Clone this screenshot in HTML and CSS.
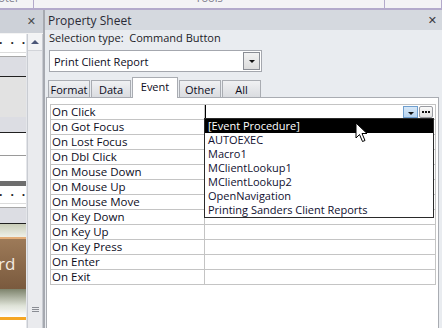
FILE: index.html
```html
<!DOCTYPE html>
<html lang="en">
<head>
  <meta charset="UTF-8">
  <title>Property Sheet</title>
  <link rel="stylesheet" href="styles.css">
</head>
<body>
  <!-- Ribbon strip, mostly scrolled off the top -->
  <div class="ribbon">
    <div class="ribbon-group first"><span class="ribbon-label">Footer</span></div>
    <div class="ribbon-group wide"><span class="ribbon-label">Tools</span></div>
    <div class="ribbon-group"></div>
  </div>

  <div class="workspace">
    <!-- Form design pane (mostly hidden) -->
    <div class="form-pane">
      <div class="form-title"><span class="close-x">&#x2715;</span></div>
      <div class="form-body">
        <div class="design">
          <div class="ruler"><span>·</span><span>·</span><span>·</span></div>
          <div class="rule-lines"></div>
          <div class="section-band"></div>
          <div class="dark-line"></div>
          <div class="detail-grey"></div>
          <div class="section-band short"></div>
          <div class="dark-line"></div>
          <div class="white-block"></div>
          <div class="white-block tall"></div>
          <div class="thick-line"></div>
          <div class="ruler low"><span>·</span><span>·</span><span>·</span></div>
          <div class="rule-lines"></div>
          <div class="section-band short"></div>
          <div class="dark-line"></div>
          <div class="fade-top"></div>
          <div class="brown-button">rd</div>
          <div class="fade-bottom"></div>
          <div class="orange-line"></div>
        </div>
        <div class="vscroll">
          <div class="scroll-up"><span class="tri-up"></span></div>
          <div class="scroll-track"></div>
          <div class="grip"><i></i><i></i><i></i></div>
          <div class="scroll-end"></div>
        </div>
      </div>
    </div>

    <div class="splitter"></div>

    <!-- Property sheet -->
    <div class="sheet">
      <div class="sheet-title">
        <span>Property Sheet</span>
        <span class="close-x dark">&#x2715;</span>
      </div>
      <div class="sheet-body">
        <div class="sel-type">Selection type:&nbsp; Command Button</div>
        <div class="combo">
          <span class="combo-text">Print Client Report</span>
          <span class="combo-btn"><span class="tri-down"></span></span>
        </div>
        <div class="tabs">
          <div class="tab">Format</div>
          <div class="tab">Data</div>
          <div class="tab active">Event</div>
          <div class="tab">Other</div>
          <div class="tab all">All</div>
        </div>
        <div class="panel">
          <div class="grid">
            <div class="row"><div class="label">On Click</div><div class="value first-value">
              <span class="val-arrow"><span class="tri-down"></span></span><span class="val-build"><i></i><i></i><i></i></span>
            </div></div>
            <div class="row"><div class="label">On Got Focus</div><div class="value"></div></div>
            <div class="row"><div class="label">On Lost Focus</div><div class="value"></div></div>
            <div class="row"><div class="label">On Dbl Click</div><div class="value"></div></div>
            <div class="row"><div class="label">On Mouse Down</div><div class="value"></div></div>
            <div class="row"><div class="label">On Mouse Up</div><div class="value"></div></div>
            <div class="row"><div class="label">On Mouse Move</div><div class="value"></div></div>
            <div class="row"><div class="label">On Key Down</div><div class="value"></div></div>
            <div class="row"><div class="label">On Key Up</div><div class="value"></div></div>
            <div class="row"><div class="label">On Key Press</div><div class="value"></div></div>
            <div class="row"><div class="label">On Enter</div><div class="value"></div></div>
            <div class="row"><div class="label">On Exit</div><div class="value"></div></div>
          </div>

          <!-- Open drop-down list for On Click -->
          <div class="dropdown">
            <div class="option selected">[Event Procedure]</div>
            <div class="option">AUTOEXEC</div>
            <div class="option">Macro1</div>
            <div class="option">MClientLookup1</div>
            <div class="option">MClientLookup2</div>
            <div class="option">OpenNavigation</div>
            <div class="option">Printing Sanders Client Reports</div>
          </div>

          <svg class="cursor" width="14" height="21" viewBox="0 0 14 21">
            <path d="M1 1 L1 16 L4.5 12.5 L7.5 19.5 L10 18.5 L7 11.5 L12 11.5 Z" fill="#fff" stroke="#000" stroke-width="1" stroke-linejoin="miter"></path>
          </svg>
        </div>
      </div>
    </div>
  </div>
</body>
</html>
```

FILE: styles.css
```css
:root {
  --text: #0c0c1c;
  --header-bg: #d5d9df;
  --body-bg: #e9ecf0;
  --grid-line: #c4c4c4;
  --panel-border: #a9acb2;
}

html, body {
  margin: 0;
  padding: 0;
}

body {
  width: 442px;
  height: 328px;
  overflow: hidden;
  background-color: var(--body-bg);
  font-family: "Open Sans", "Noto Sans", sans-serif;
  font-size: 11px;
  color: var(--text);
}

/* Ribbon strip */
.ribbon {
  display: flex;
  height: 8px;
  background-color: #f3f3f5;
  border-bottom: 2px solid #b3aacb;
  overflow: hidden;
}

.ribbon-group {
  position: relative;
  flex: 1;
  border-right: 1px solid #b3aacb;
}

.ribbon-group.first {
  flex: 0 0 33px;
}

.ribbon-group.wide {
  flex: 0 0 350px;
}

.ribbon-label {
  display: block;
  margin-top: -9px;
  text-align: center;
  color: #7a7a8a;
  font-size: 11px;
  line-height: 14px;
}

.ribbon-group.first .ribbon-label {
  text-align: left;
  margin-left: -14px;
}

.workspace {
  display: flex;
  height: 318px;
}

/* Form design pane */
.form-pane {
  width: 43px;
  display: flex;
  flex-direction: column;
  background-color: #e4e6ea;
}

.form-title {
  height: 23px;
  background-color: #cdd1d8;
  display: flex;
  justify-content: flex-end;
  align-items: center;
  padding-right: 7px;
}

.close-x {
  font-size: 11px;
  color: #4a4a4a;
  font-family: "DejaVu Sans", sans-serif;
}

.close-x.dark {
  color: #3a3a40;
  font-weight: bold;
}

.form-body {
  flex: 1;
  display: flex;
  border-top: 1px solid #f4f4f4;
}

.design {
  width: 27px;
  display: flex;
  flex-direction: column;
  background-color: #fff;
  overflow: hidden;
}

.ruler {
  height: 18px;
  display: flex;
  gap: 8px;
  align-items: center;
  font-size: 12px;
  font-weight: bold;
  line-height: 1;
  color: #222;
  margin-left: -1px;
}

.ruler.low {
  height: 17px;
}

.rule-lines {
  height: 3px;
  border-top: 1px solid #dcdcdc;
  border-bottom: 1px solid #a8a8a8;
}

.section-band {
  height: 19px;
  background-color: #dcdde3;
}

.section-band.short {
  height: 15px;
}

.dark-line {
  height: 1px;
  background-color: #202020;
}

.detail-grey {
  height: 40px;
  background-color: #e2e2e2;
}

.white-block {
  height: 22px;
  border-bottom: 1px solid #9a9a9a;
}

.white-block.tall {
  height: 25px;
  border-bottom: none;
}

.thick-line {
  height: 5px;
  background-color: #6e6e6e;
}

.fade-top {
  height: 13px;
  background: linear-gradient(#c9cdb8, #eef0e8);
}

.brown-button {
  height: 50px;
  border-top: 2px solid #e3ad78;
  background: linear-gradient(#9d7a58, #7a5a3e);
  color: #f4ece2;
  font-size: 17px;
  line-height: 50px;
  text-indent: -2px;
}

.fade-bottom {
  height: 28px;
  background: linear-gradient(#7d836c, #dfe3d8 60%, #fff);
}

.orange-line {
  height: 3px;
  background-color: #f5a623;
}

.vscroll {
  width: 14px;
  margin-left: 1px;
  display: flex;
  flex-direction: column;
  background-color: #eaebee;
  border-left: 1px solid #c9ccd2;
  border-right: 1px solid #c9ccd2;
}

.scroll-up {
  height: 16px;
  display: flex;
  justify-content: center;
  align-items: center;
  border-bottom: 1px solid #d2d4d9;
  background-color: #f2f3f5;
}

.tri-up {
  width: 0;
  height: 0;
  border-left: 4px solid transparent;
  border-right: 4px solid transparent;
  border-bottom: 4px solid #4a5678;
}

.scroll-track {
  flex: 1;
}

.grip {
  display: flex;
  flex-direction: column;
  align-items: center;
  gap: 1px;
  margin-bottom: 12px;
}

.grip i {
  display: block;
  width: 7px;
  height: 1px;
  background-color: #8a8d94;
}

.scroll-end {
  height: 4px;
}

.splitter {
  width: 3px;
  border-left: 1px solid #a6a9b0;
  border-right: 1px solid #a6a9b0;
  background-color: #dfe2e7;
  box-sizing: border-box;
}

/* Property sheet */
.sheet {
  flex: 1;
  display: flex;
  flex-direction: column;
}

.sheet-title {
  height: 20px;
  background-color: var(--header-bg);
  display: flex;
  justify-content: space-between;
  align-items: center;
  padding: 0 6px 0 3px;
  font-size: 12px;
  color: #2a2a36;
}

.sheet-body {
  flex: 1;
  display: flex;
  flex-direction: column;
  padding-left: 1px;
}

.sel-type {
  height: 15px;
  line-height: 15px;
  padding: 0 3px;
  color: #1c1c28;
}

.combo {
  margin: 5px 0 0 3px;
  width: 213px;
  height: 22px;
  box-sizing: border-box;
  border: 1px solid #a4a7ae;
  background-color: #fff;
  display: flex;
  align-items: center;
  justify-content: space-between;
  padding: 0 1px 0 4px;
}

.combo-btn {
  width: 15px;
  height: 16px;
  border: 1px solid #8a8d94;
  background: linear-gradient(#f2f2f2, #dcdcdc);
  display: flex;
  justify-content: center;
  align-items: center;
}

.tri-down {
  width: 0;
  height: 0;
  border-left: 3px solid transparent;
  border-right: 3px solid transparent;
  border-top: 3px solid #111;
}

.tabs {
  display: flex;
  align-items: flex-end;
  height: 20px;
  margin-top: 5px;
  padding-left: 2px;
}

.tab {
  height: 17px;
  line-height: 17px;
  padding: 0;
  box-sizing: border-box;
  border: 1px solid #a9acb2;
  border-bottom: none;
  background: linear-gradient(#f0f1f3, #dadce0);
  margin-right: 1px;
  font-size: 11px;
  text-align: center;
}

.tab:nth-child(1) { width: 42px; }
.tab:nth-child(2) { width: 40px; }
.tab.active {
  width: 46px;
  height: 21px;
  line-height: 17px;
  background: #fff;
  margin-bottom: -1px;
  position: relative;
  z-index: 1;
}
.tab:nth-child(4) { width: 42px; }
.tab.all { width: 39px; }

.panel {
  position: relative;
  flex: 1;
  margin-right: 4px;
  background-color: #fff;
  border: 1px solid var(--panel-border);
  border-bottom: none;
  padding: 6px 2px 0 3px;
}

.grid {
  width: 384px;
  border-top: 1px solid var(--grid-line);
  border-left: 1px solid var(--grid-line);
  border-right: 1px solid var(--grid-line);
}

.row {
  display: flex;
  height: 15px;
  box-sizing: border-box;
  border-bottom: 1px solid var(--grid-line);
}

.label {
  width: 152px;
  padding-left: 1px;
  border-right: 1px solid var(--grid-line);
  line-height: 14px;
  font-size: 11.5px;
}

.value {
  flex: 1;
}

.first-value {
  display: flex;
  justify-content: flex-end;
  align-items: flex-start;
  gap: 1px;
  padding-right: 2px;
  border-left: 1px solid #000;
}

.val-arrow {
  width: 15px;
  height: 12px;
  margin-top: 1px;
  box-sizing: border-box;
  border: 1px solid #6f9fcf;
  background: linear-gradient(#d7e8f8, #b6d3ef);
  display: flex;
  justify-content: center;
  align-items: flex-end;
  padding-bottom: 2px;
}

.val-build {
  width: 14px;
  height: 12px;
  margin-top: 1px;
  box-sizing: border-box;
  border: 1px solid #9a9ca2;
  border-radius: 2px;
  background: linear-gradient(#fafafa, #e2e2e2);
  display: flex;
  justify-content: center;
  align-items: center;
  gap: 1px;
}

.val-build i {
  display: block;
  width: 2px;
  height: 2px;
  background-color: #111;
}

/* Open list */
.dropdown {
  position: absolute;
  left: 157px;
  top: 20px;
  width: 230px;
  box-sizing: border-box;
  border: 1px solid #2a2a2a;
  background-color: #fff;
}

.option {
  height: 14px;
  line-height: 14px;
  padding-left: 3px;
  font-size: 11px;
  color: #101030;
}

.option.selected {
  background-color: #000;
  color: #fff;
}

.cursor {
  position: absolute;
  left: 308px;
  top: 24px;
}
```
